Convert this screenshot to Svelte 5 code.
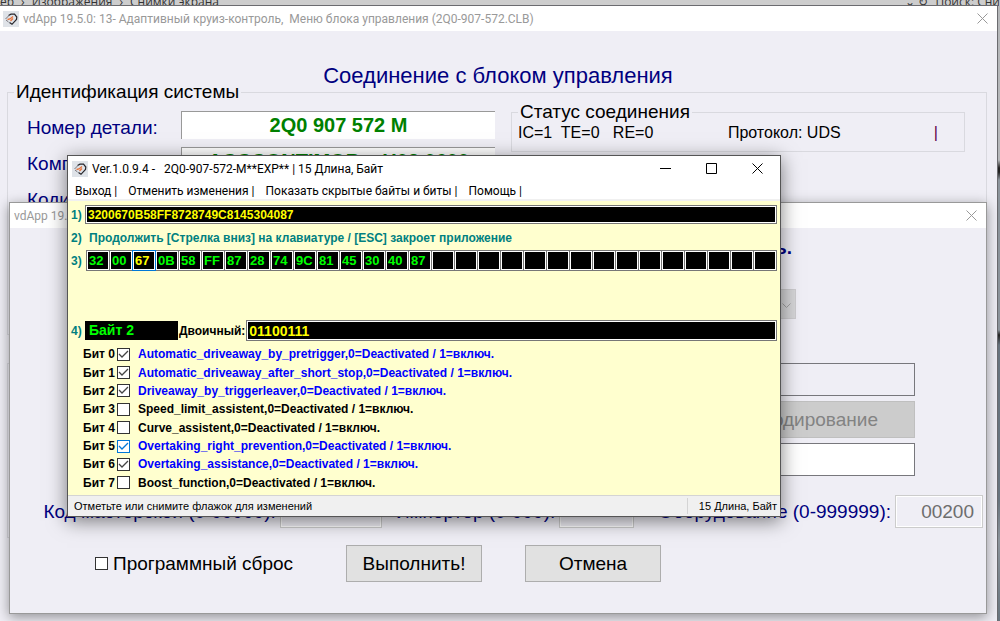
<script lang="ts">
	const rawCoding = '3200670B58FF8728749C8145304087';
	const cellCount = 30;
	const currentByte = 2;

	const cells = Array.from({ length: cellCount }, (_, i) => rawCoding.slice(i * 2, i * 2 + 2));

	const menu = ['Выход', 'Отменить изменения', 'Показать скрытые байты и биты', 'Помощь'];

	let bits = $state([
		{ name: 'Automatic_driveaway_by_pretrigger', on: true },
		{ name: 'Automatic_driveaway_after_short_stop', on: true },
		{ name: 'Driveaway_by_triggerleaver', on: true },
		{ name: 'Speed_limit_assistent', on: false },
		{ name: 'Curve_assistent', on: false },
		{ name: 'Overtaking_right_prevention', on: true },
		{ name: 'Overtaking_assistance', on: true },
		{ name: 'Boost_function', on: false }
	]);
	let focusedBit = $state(5);

	let binary = $derived(
		bits
			.map((bit) => (bit.on ? '1' : '0'))
			.reverse()
			.join('')
	);
</script>

{#snippet logo()}
	<svg class="logo" viewBox="0 0 16 16" aria-hidden="true">
		<rect width="16" height="16" fill="#dfe3e8" />
		<path d="M5.500 4.500 8 3.200h3.500L13.800 6l-.3 2.500L9 13.300 6.500 11.500" fill="none" stroke="#26262c" stroke-width="1.200" />
		<path d="M2.500 8 5.500 5M3 9l2.500 2" fill="none" stroke="#77777f" />
		<path d="M4.500 8.500 7 8l3-2.500M7.500 10l2.500-2.500" fill="none" stroke="#e8743c" stroke-width="1.300" />
	</svg>
{/snippet}

{#snippet cross()}
	<svg viewBox="0 0 11 11" width="11" height="11" aria-hidden="true">
		<path d="m0.5 0.5 10 10m0-10-10 10" fill="none" stroke="currentColor" />
	</svg>
{/snippet}

<div class="desktop">
	<!-- ── Explorer behind the windows ── -->
	<div class="explorer">
		<span>ер</span><span>›</span><span>Изображения</span><span>›</span><span>Снимки экрана</span>
		<span class="search">⌄ ↻</span><span>Поиск: Сни</span>
	</div>

	<!-- ── Main window ── -->
	<section class="window main">
		<header class="titlebar">
			{@render logo()}
			<span class="title">vdApp 19.5.0: 13- Адаптивный круиз-контроль,&nbsp; Меню блока управления (2Q0-907-572.CLB)</span>
			<button class="close" aria-label="Закрыть">{@render cross()}</button>
		</header>
		<h1>Соединение с блоком управления</h1>
		<fieldset class="system">
			<legend>Идентификация системы</legend>
			<div class="fields">
				<label for="part">Номер детали:</label>
				<input id="part" value="2Q0 907 572 M" readonly />
				<label for="component">Компонент:</label>
				<input id="component" value="ACCCONTIMQB x H03 0600" readonly />
				<label for="coding">Кодировка:</label>
				<input id="coding" readonly />
			</div>
			<fieldset class="status">
				<legend>Статус соединения</legend>
				<span class="counters">IC=1&nbsp; TE=0&nbsp;&nbsp; RE=0</span>
				<span class="protocol">Протокол: UDS</span>
				<span class="spinner">|</span>
			</fieldset>
		</fieldset>
		<fieldset class="rest"></fieldset>
	</section>

	<!-- ── Coding dialog ── -->
	<section class="window dialog">
		<header class="titlebar">
			<span class="title">vdApp 19.5.0: 13- Адаптивный круиз-контроль</span>
			<button class="close" aria-label="Закрыть">{@render cross()}</button>
		</header>
		<p class="hint">Введите новое значение кодировки или нажмите Отмена, чтобы выйть.</p>
		<div class="picker">
			<select disabled aria-label="Блок"><option></option></select>
			<svg viewBox="0 0 9 5" width="9" height="5" aria-hidden="true">
				<path d="m0.500 0.500 4 4 4-4" fill="none" stroke="#a0a0a0" />
			</svg>
		</div>
		<div class="stack">
			<input disabled aria-label="Текущая кодировка" />
			<button disabled>Длинное кодирование</button>
			<input aria-label="Новая кодировка" />
		</div>
		<div class="codes">
			<label for="workshop">Код мастерской (0-99999):</label>
			<input id="workshop" class="workshop" disabled />
			<label for="importer">Импортёр (0-999):</label>
			<input id="importer" class="importer" disabled />
			<label for="equipment">Оборудование (0-999999):</label>
			<input id="equipment" class="equipment" value="00200" disabled />
		</div>
		<div class="actions">
			<label><input type="checkbox" />Программный сброс</label>
			<button>Выполнить!</button>
			<button>Отмена</button>
		</div>
	</section>

	<!-- ── Byte editor ── -->
	<section class="window editor">
		<header class="titlebar">
			{@render logo()}
			<span class="title">Ver.1.0.9.4 -&nbsp;&nbsp; 2Q0-907-572-M**EXP** | 15 Длина, Байт</span>
			<button aria-label="Свернуть">
				<svg viewBox="0 0 11 11" width="11" height="11"><path d="M0 5.500h11" stroke="currentColor" /></svg>
			</button>
			<button aria-label="Развернуть">
				<svg viewBox="0 0 11 11" width="11" height="11"><path d="M.5.5h10v10H.5z" fill="none" stroke="currentColor" /></svg>
			</button>
			<button class="close" aria-label="Закрыть">{@render cross()}</button>
		</header>
		<nav>
			{#each menu as item}
				<button>{item} |</button>
			{/each}
		</nav>
		<div class="panel">
			<div class="line">
				<label class="step" for="raw">1)</label>
				<input id="raw" class="raw" value={rawCoding} readonly />
			</div>
			<div class="line note">
				<span class="step">2)</span>
				<span>Продолжить [Стрелка вниз] на клавиатуре / [ESC] закроет приложение</span>
			</div>
			<div class="line">
				<span class="step">3)</span>
				<div class="cells">
					{#each cells as cell, i}
						<input class:current={i === currentByte} value={cell} aria-label="Байт {i}" readonly />
					{/each}
				</div>
			</div>
			<div class="line byte">
				<span class="step">4)</span>
				<output>Байт {currentByte}</output>
				<label for="binary">Двоичный:</label>
				<input id="binary" class="binary" value={binary} readonly />
			</div>
			<div class="bits">
				{#each bits as bit, i}
					<label class:on={bit.on}>
						<span class="number">Бит {i}</span>
						<input
							type="checkbox"
							class:focused={focusedBit === i}
							bind:checked={bit.on}
							onfocus={() => (focusedBit = i)}
						/>
						<span>{bit.name},0=Deactivated / 1=включ.</span>
					</label>
				{/each}
			</div>
		</div>
		<footer>
			<span class="message">Отметьте или снимите флажок для изменений</span>
			<span>15 Длина, Байт</span>
		</footer>
	</section>
</div>

<style>
	:global(body) {
		font-family: 'Liberation Sans', Arial, sans-serif;
		color: #000;
	}

	* {
		box-sizing: border-box;
	}
	button,
	input,
	select {
		font: inherit;
		border-radius: 0;
		margin: 0;
		min-width: 0;
	}
	input[type='checkbox'] {
		appearance: none;
		flex: none;
		width: 13px;
		height: 13px;
		border: 1px solid #333;
		background: #fff;
	}
	input[type='checkbox']:checked {
		background: #fff
			url("data:image/svg+xml,%3Csvg xmlns='http://www.w3.org/2000/svg' viewBox='0 0 11 11'%3E%3Cpath d='m1 5 3 3 6-6' fill='none' stroke='%23444' stroke-width='1.300'/%3E%3C/svg%3E");
	}
	input[type='checkbox'].focused {
		border-color: #0078d7;
	}
	input[type='checkbox'].focused:checked {
		background-image: url("data:image/svg+xml,%3Csvg xmlns='http://www.w3.org/2000/svg' viewBox='0 0 11 11'%3E%3Cpath d='m1 5 3 3 6-6' fill='none' stroke='%230078d7' stroke-width='1.300'/%3E%3C/svg%3E");
	}
	fieldset {
		margin: 0;
		padding: 0;
		min-width: 0;
		border: 1px solid #d9d9df;
	}
	legend {
		padding: 0 2px;
	}

	.desktop {
		position: relative;
		min-height: 100vh;
		overflow: hidden;
		background: linear-gradient(#b5b7b9 0 160px, #222 168px 172px, #8d959c 180px 330px, #222 335px, #69757f 345px 500px, #8d959c 540px, #69757f 100%);
	}

	/* ── Explorer ── */
	.explorer {
		display: flex;
		gap: 7px;
		height: 6px;
		align-items: flex-end;
		overflow: hidden;
		background: #cdcdcd;
		color: #333;
		font: 12px/8px 'Open Sans', sans-serif;
	}
	.search {
		margin-left: auto;
	}

	/* ── Windows ── */
	.window {
		position: absolute;
		display: flex;
		flex-direction: column;
		background: #efeef5;
		border: 1px solid #6b6b6f;
	}
	.titlebar {
		display: flex;
		align-items: center;
		height: 25px;
		padding-left: 4px;
		background: #fff;
		color: #999;
		font: 12px/16px Roboto, sans-serif;
	}
	.title {
		flex: 1;
		white-space: nowrap;
		overflow: hidden;
	}
	.titlebar button {
		display: flex;
		align-items: center;
		justify-content: center;
		width: 46px;
		height: 24px;
		padding: 0;
		border: 0;
		background: none;
		color: inherit;
	}
	.titlebar .close {
		width: 30px;
	}
	.logo {
		width: 16px;
		height: 16px;
		margin-right: 4px;
	}

	/* ── Main window ── */
	.main {
		inset: 5px 2px -8px -2px;
	}
	h1 {
		margin: 32px 0 0;
		color: #000080;
		font-size: 22px;
		line-height: 26px;
		font-weight: 400;
		text-align: center;
	}
	.system {
		display: flex;
		gap: 16px;
		align-items: flex-start;
		min-height: 254px;
		margin: -8px 10px 0 8px;
		padding: 8px 21px 0 19px;
		font-size: 19px;
		line-height: 22px;
	}
	.system > legend {
		margin-left: -13px;
	}
	.fields {
		display: grid;
		grid-template-columns: 154px 314px;
		row-gap: 8px;
		align-items: center;
		color: #000080;
	}
	.fields label {
		padding-top: 6px;
	}
	.fields input {
		height: 28px;
		border: 0;
		border-top: 1px solid #999;
		border-left: 1px solid #999;
		background: #fff;
		color: #008000;
		font-size: 20px;
		font-weight: 700;
		text-align: center;
	}
	.status {
		flex: 1;
		display: flex;
		margin-top: -10px;
		padding: 0 26px 8px 6px;
		font-size: 16px;
		line-height: 20px;
	}
	.status legend {
		font-size: 19px;
		line-height: 22px;
	}
	.counters,
	.protocol {
		flex: 1;
	}
	.protocol {
		padding-left: 4px;
	}
	.spinner {
		color: #60004a;
	}
	.rest {
		min-height: 175px;
		margin: 28px 10px 0 8px;
	}

	/* ── Coding dialog ── */
	.dialog {
		top: 202px;
		left: 9px;
		right: 13px;
		border-color: #999;
		box-shadow: 0 3px 12px rgba(0, 0, 0, 0.4);
		font-size: 19px;
		line-height: 22px;
	}
	.hint {
		margin: 9px 194px 0 0;
		color: #000080;
		font-weight: 700;
		text-align: right;
	}
	.picker {
		position: relative;
		display: flex;
		justify-content: flex-end;
		margin: 30px 190px 0 0;
	}
	.picker select {
		appearance: none;
		width: 500px;
		height: 30px;
		border: 1px solid #bfbfbf;
		background: #ccc;
	}
	.picker svg {
		position: absolute;
		right: 5px;
		top: 14px;
	}
	.stack {
		display: flex;
		flex-direction: column;
		gap: 5px;
		margin: 44px 71px 0 auto;
		width: 560px;
	}
	.stack input {
		height: 33px;
		border: 1px solid #77777c;
		background: #fff;
	}
	.stack input:disabled {
		background: #efeef5;
	}
	.stack button {
		height: 37px;
		padding-right: 36px;
		border: 1px solid #bfbfbf;
		background: #ccc;
		color: #838383;
		text-align: right;
	}
	.codes {
		display: flex;
		align-items: center;
		justify-content: flex-end;
		margin-top: 19px;
		padding: 0 3px;
		color: #000080;
		white-space: nowrap;
	}
	.codes input {
		height: 33px;
		margin: 0 14px 0 4px;
		border: 1px solid #ccc;
		background: #efeef5;
		box-shadow: inset 0 0 0 1px #fff;
		color: #6d6d6d;
		padding: 0 8px;
		text-align: right;
	}
	.codes .workshop {
		width: 102px;
	}
	.codes .importer {
		width: 75px;
		margin-right: 24px;
	}
	.codes .equipment {
		width: 88px;
		margin-right: 0;
	}
	.actions {
		display: flex;
		align-items: center;
		gap: 43px;
		padding: 17px 85px 31px;
	}
	.actions label {
		display: flex;
		align-items: center;
		gap: 5px;
		width: 208px;
		white-space: nowrap;
	}
	.actions button {
		width: 136px;
		height: 37px;
		border: 1px solid #adadad;
		background: #e1e1e1;
	}

	/* ── Byte editor ── */
	.editor {
		top: 155px;
		left: 67px;
		width: 714px;
		border-color: #555;
		background: #fff;
		box-shadow: 0 4px 18px rgba(0, 0, 0, 0.5);
		font-size: 12px;
		line-height: 16px;
	}
	.editor .titlebar {
		color: #000;
	}
	.editor .close {
		width: 46px;
	}
	nav {
		display: flex;
		gap: 11px;
		height: 20px;
		padding: 0 7px;
		border-bottom: 2px solid #f0f0f0;
		font: 12px/20px Roboto, sans-serif;
	}
	nav button {
		padding: 0;
		border: 0;
		background: none;
	}
	.panel {
		padding: 4px 3px 3px;
		background: #ffffcf;
		font-weight: 700;
	}
	.line {
		display: flex;
		align-items: center;
	}
	.step {
		flex: none;
		width: 14px;
		color: #008080;
	}
	.raw,
	.binary,
	.cells input {
		border: 1px solid #777;
		outline: 1px solid #fff;
		outline-offset: -2px;
		background: #000;
		color: #ff0;
		padding: 0 2px;
	}
	.raw {
		flex: 1;
		height: 19px;
	}
	.note {
		height: 26px;
		padding-top: 1px;
		color: #008080;
	}
	.note .step {
		width: 18px;
	}
	.cells {
		flex: 1;
		display: flex;
		padding: 0 1px;
	}
	.cells input {
		flex: 1;
		width: 0;
		height: 21px;
		margin-right: -1px;
		color: #0f0;
		font-size: 13px;
	}
	.cells .current {
		position: relative;
		border-color: #0078d7;
		color: #ff0;
	}
	.byte {
		margin-top: 49px;
	}
	.byte output {
		width: 93px;
		height: 19px;
		padding-left: 4px;
		background: #000;
		color: #0f0;
		font-size: 14px;
		line-height: 18px;
	}
	.byte label {
		padding: 0 1px;
	}
	.binary {
		flex: 1;
		height: 21px;
		font-size: 14px;
	}
	.bits {
		display: grid;
		min-height: 147px;
		margin-top: 4px;
		padding-left: 12px;
	}
	.bits label {
		display: flex;
		align-items: center;
	}
	.bits .on {
		color: #00f;
	}
	.bits .number {
		width: 34px;
		color: #000;
	}
	.bits input {
		margin-right: 8px;
	}
	footer {
		display: flex;
		justify-content: space-between;
		padding: 2px 3px 2px 6px;
		border-top: 1px solid #d4d4d4;
		background: #f0f0f0;
		font-size: 11px;
	}
	.message {
		flex: 1;
		border-right: 1px solid #d4d4d4;
		margin-right: 11px;
	}
</style>
